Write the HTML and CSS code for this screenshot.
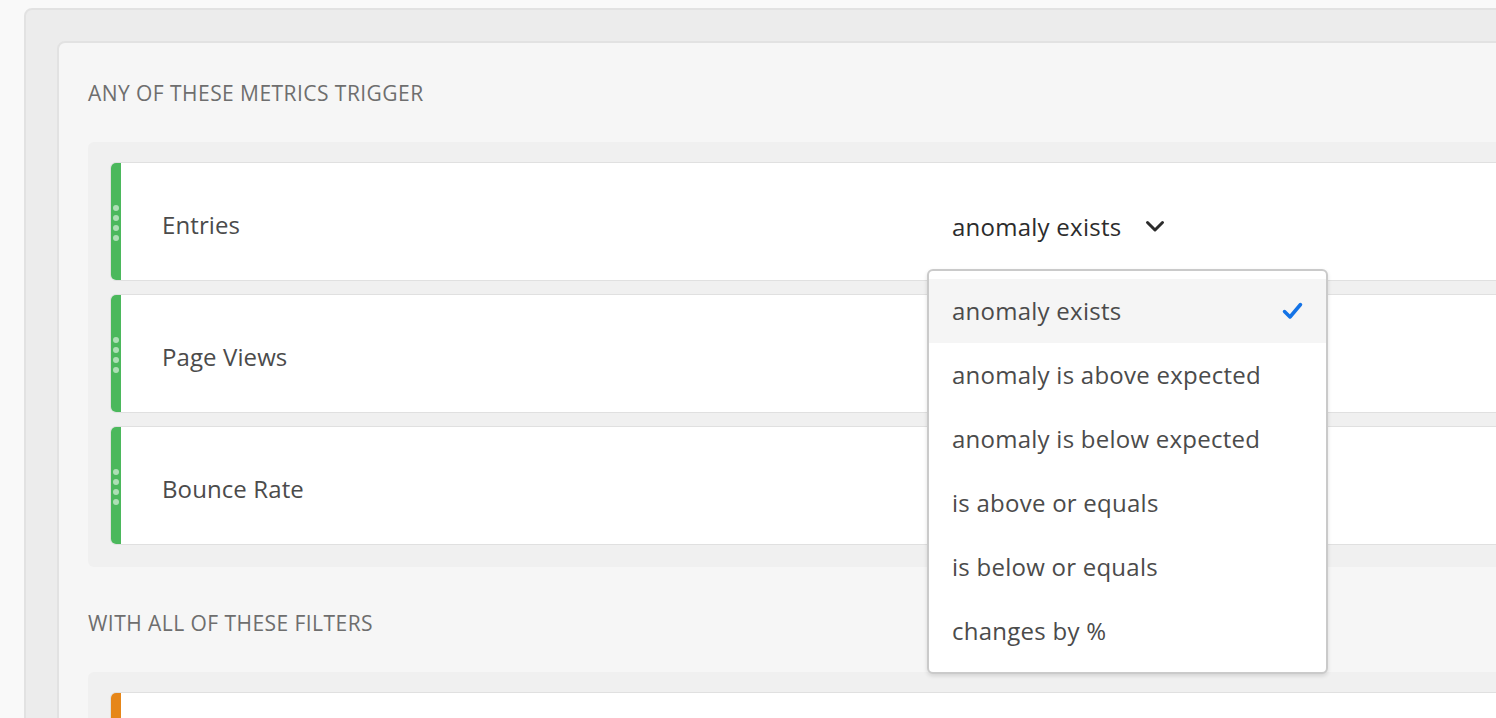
FILE: index.html
```html
<!DOCTYPE html>
<html lang="en">
<head>
<meta charset="utf-8">
<title>Alert conditions</title>
<link rel="stylesheet" href="styles.css">
</head>
<body>
<div class="outer">
  <div class="inner">
    <div class="section-label">Any of these metrics trigger</div>
    <div class="well">
      <div class="row">
        <div class="handle handle-green"><span class="dot"></span><span class="dot"></span><span class="dot"></span><span class="dot"></span></div>
        <div class="name">Entries</div>
        <div class="select">
          <span class="select-value">anomaly exists</span>
          <svg class="chevron" width="20" height="13" viewBox="0 0 20 13"><path d="M2.5 2.5 L10 10 L17.5 2.5" fill="none" stroke="#2c2c2c" stroke-width="3" stroke-linecap="round" stroke-linejoin="round"/></svg>
          <div class="menu">
            <div class="menu-item selected"><span>anomaly exists</span><svg class="check" width="21" height="18" viewBox="0 0 21 18"><path d="M2.5 9.5 L8 15 L18.5 2.5" fill="none" stroke="#1473e6" stroke-width="3.5" stroke-linecap="round" stroke-linejoin="round"/></svg></div>
            <div class="menu-item"><span>anomaly is above expected</span></div>
            <div class="menu-item"><span>anomaly is below expected</span></div>
            <div class="menu-item"><span>is above or equals</span></div>
            <div class="menu-item"><span>is below or equals</span></div>
            <div class="menu-item"><span>changes by %</span></div>
          </div>
        </div>
      </div>
      <div class="row">
        <div class="handle handle-green"><span class="dot"></span><span class="dot"></span><span class="dot"></span><span class="dot"></span></div>
        <div class="name">Page Views</div>
      </div>
      <div class="row">
        <div class="handle handle-green"><span class="dot"></span><span class="dot"></span><span class="dot"></span><span class="dot"></span></div>
        <div class="name">Bounce Rate</div>
      </div>
    </div>
    <div class="section-label section-label-next">With all of these filters</div>
    <div class="well">
      <div class="row">
        <div class="handle handle-orange"><span class="dot"></span><span class="dot"></span><span class="dot"></span><span class="dot"></span></div>
        <div class="name"></div>
      </div>
    </div>
  </div>
</div>
</body>
</html>
```
FILE: styles.css
```css
html, body {
  margin: 0;
  padding: 0;
}
body {
  background: #f9f9f9;
  overflow: hidden;
  height: 718px;
  font-family: "Open Sans", "Noto Sans", sans-serif;
}
.outer {
  margin: 8px 0 0 24px;
  width: 1700px;
  height: 900px;
  box-sizing: border-box;
  background: #ececec;
  border: 2px solid #e2e2e2;
  border-radius: 8px;
  padding: 31px 0 0 31px;
}
.inner {
  height: 900px;
  background: #f6f6f6;
  border: 2px solid #e2e2e2;
  border-radius: 8px;
  padding: 38px 0 0 29px;
}
.section-label {
  font-size: 21px;
  letter-spacing: 0.45px;
  line-height: 24px;
  color: #6e6e6e;
  text-transform: uppercase;
  margin-bottom: 37px;
  margin-left: 0;
}
.section-label-next {
  margin-top: 44px;
  margin-bottom: 37px;
}
.well {
  background: #f0f0f0;
  border-radius: 6px;
  padding: 20px 0 22px 22px;
  display: flex;
  flex-direction: column;
  gap: 13px;
}
.row {
  display: flex;
  align-items: center;
  height: 119px;
  box-sizing: border-box;
  background: #ffffff;
  border: 1px solid #e0e0e0;
  border-radius: 6px;
}
.handle {
  align-self: stretch;
  width: 10px;
  border-radius: 5px 0 0 5px;
  display: flex;
  flex-direction: column;
  align-items: center;
  justify-content: center;
  gap: 4px;
  padding-top: 2px;
}
.handle-green { background: #4bb85c; }
.handle-orange { background: #e68619; }
.dot {
  width: 6px;
  height: 6px;
  border-radius: 50%;
  background: rgba(255, 255, 255, 0.55);
}
.name {
  margin-left: 41px;
  width: 790px;
  font-size: 24px;
  letter-spacing: 0.1px;
  color: #4b4b4b;
  line-height: 32px;
  padding-top: 6px;
}
.select {
  position: relative;
  display: flex;
  align-items: center;
  height: 32px;
  padding-top: 10px;
}
.select-value {
  font-size: 24px;
  letter-spacing: 0.25px;
  line-height: 32px;
  color: #2c2c2c;
}
.chevron {
  margin-left: 24px;
}
.menu {
  position: absolute;
  left: -25px;
  top: 68px;
  width: 401px;
  box-sizing: border-box;
  background: #ffffff;
  border: 2px solid #cacaca;
  border-radius: 6px;
  box-shadow: 0 2px 4px rgba(0, 0, 0, 0.12);
  padding: 8px 0 9px;
  z-index: 5;
}
.menu-item {
  height: 64px;
  display: flex;
  align-items: center;
  justify-content: space-between;
  padding: 0 23px 0 23px;
  font-size: 24px;
  letter-spacing: 0.25px;
  color: #4b4b4b;
}
.menu-item.selected {
  background: #f5f5f5;
}
```
